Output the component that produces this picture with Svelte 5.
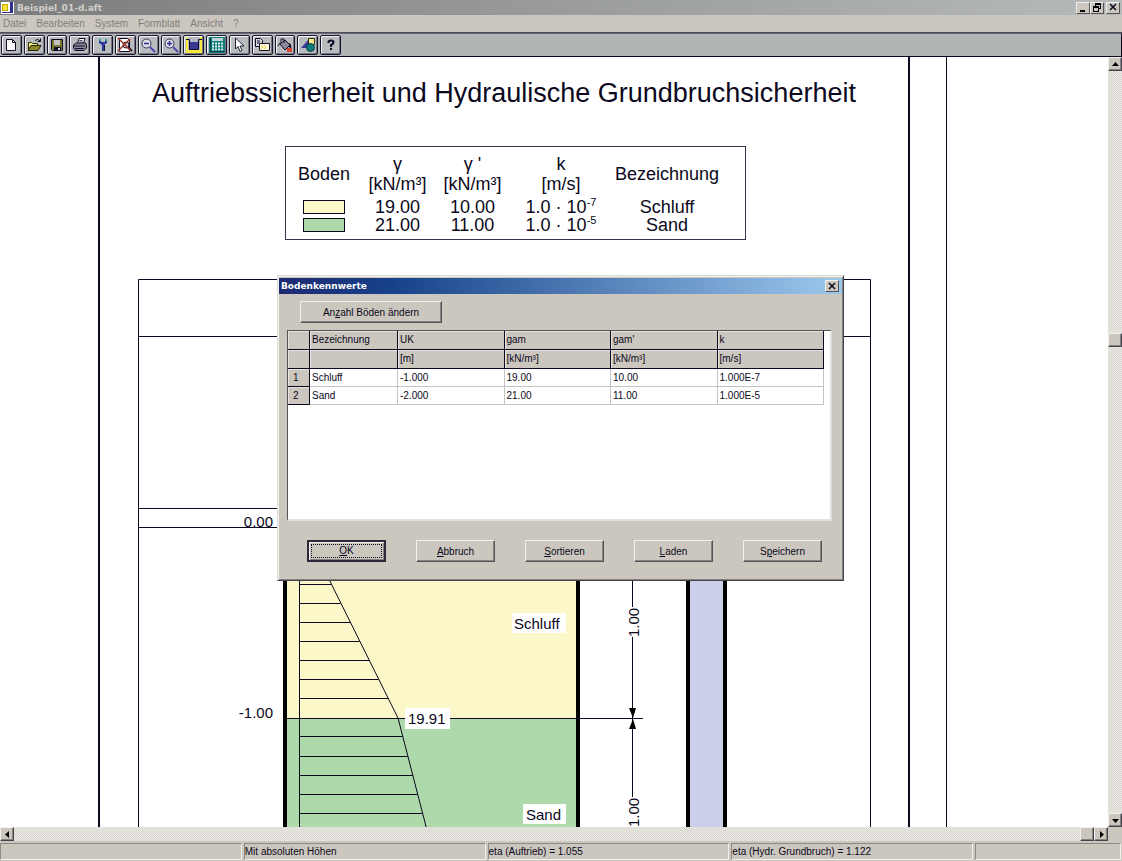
<script lang="ts">
	type Soil = {
		name: string;
		bottom: string;
		gamma: string;
		gammaSub: string;
		k: string;
		exponent: string;
		color: 'silt' | 'sand';
	};

	const menus = ['Datei', 'Bearbeiten', 'System', 'Formblatt', 'Ansicht', '?'];

	const tools = [
		{ id: 'new', label: 'Neu' },
		{ id: 'open', label: 'Öffnen' },
		{ id: 'save', label: 'Speichern' },
		{ id: 'print', label: 'Drucken' },
		{ id: 'settings', label: 'Einstellungen' },
		{ id: 'nozoom', label: 'Ganzes Blatt' },
		{ id: 'zoomout', label: 'Verkleinern' },
		{ id: 'zoomin', label: 'Vergrößern' },
		{ id: 'pit', label: 'Baugrube' },
		{ id: 'calc', label: 'Berechnen' },
		{ id: 'pointer', label: 'Auswählen' },
		{ id: 'copy', label: 'Kopieren' },
		{ id: 'fill', label: 'Farben' },
		{ id: 'shapes', label: 'Objekte' },
		{ id: 'help', label: 'Hilfe' }
	];

	const soils: Soil[] = [
		{ name: 'Schluff', bottom: '-1.000', gamma: '19.00', gammaSub: '10.00', k: '1.000E-7', exponent: '-7', color: 'silt' },
		{ name: 'Sand', bottom: '-2.000', gamma: '21.00', gammaSub: '11.00', k: '1.000E-5', exponent: '-5', color: 'sand' }
	];

	const columns = [
		{ name: 'Bezeichnung', unit: '' },
		{ name: 'UK', unit: '[m]' },
		{ name: 'gam', unit: '[kN/m³]' },
		{ name: "gam'", unit: '[kN/m³]' },
		{ name: 'k', unit: '[m/s]' }
	];

	// label split around the access key
	const actions = [
		['', 'O', 'K'],
		['', 'A', 'bbruch'],
		['', 'S', 'ortieren'],
		['', 'L', 'aden'],
		['S', 'p', 'eichern']
	];

	const status = ['', 'Mit absoluten Höhen', 'eta (Auftrieb) = 1.055', 'eta (Hydr. Grundbruch) = 1.122', ''];

	// pressure diagram: y of each hatch line, the width follows the envelope
	const hatch = [584, 603, 622, 641, 660, 679, 698, 736, 756, 775, 794, 813];
	function envelope(y: number) {
		return y < 718 ? 330 + (y - 582) / 2 : 398 + ((y - 718) * 28) / 109;
	}

	let open = $state(true);
</script>

<div class="app">
	<header class="titlebar">
		<svg class="logo" viewBox="0 0 13 13" shape-rendering="crispEdges" aria-hidden="true">
			<path fill="#fff" d="M0 1h13v12H0z" />
			<path fill="#f5e53c" stroke="#c9a800" d="M1.500 3.500h5v6h-5z" />
			<path fill="#2b2f91" d="M9 1h3v11H1v-1h8z" />
		</svg>
		<span class="title">Beispiel_01-d.aft</span>
		<div class="window-buttons">
			<button type="button" class="sys" aria-label="Minimieren">
				<svg viewBox="0 0 10 9" shape-rendering="crispEdges"><path d="M2 7h5v2H2z" /></svg>
			</button>
			<button type="button" class="sys" aria-label="Wiederherstellen">
				<svg viewBox="0 0 10 9" shape-rendering="crispEdges">
					<path d="M3 0h6v6H7V5h1V2H4v1H3zM1 3h6v6H1zM2 5v3h4V5z" fill-rule="evenodd" />
				</svg>
			</button>
			<button type="button" class="sys close" aria-label="Schließen">
				<svg viewBox="0 0 10 9"><path d="M2 1l6 6M8 1L2 7" stroke="#0b0820" stroke-width="1.500" /></svg>
			</button>
		</div>
	</header>

	<nav class="menubar" aria-label="Menü">
		{#each menus as menu}
			<button type="button">{menu}</button>
		{/each}
	</nav>

	<div class="toolbar" role="toolbar" aria-label="Werkzeuge">
		<div class="tools">
			{#each tools as tool}
				<button type="button" class="tool" aria-label={tool.label}>
					<svg viewBox="0 0 16 16" fill="none">
						{#if tool.id === 'new'}
							<path d="M3.500 2.500h6l3 3v8h-9z" fill="#fff" stroke="#100c28" />
							<path d="M9.500 2.500v3h3" stroke="#100c28" />
						{:else if tool.id === 'open'}
							<path d="M2.500 13V5.500h3l1 1h5V9" fill="#ecea80" stroke="#33330c" />
							<path d="M2 13.500l3-5h10l-3 5z" fill="#8b8a20" stroke="#24240c" />
							<path d="M9 3.500q3-2.500 5 .5M14.500 1.500v3h-3" stroke="#100c28" />
						{:else if tool.id === 'save'}
							<path d="M2.500 2.500h11v11h-10l-1-1z" fill="#77782c" stroke="#100c28" />
							<path d="M5 3h6v5H5z" fill="#c4c2c0" />
							<path d="M5 10h7v4H5z" fill="#100c28" />
							<path d="M9 11h2v2H9z" fill="#d8d8d8" />
						{:else if tool.id === 'print'}
							<path d="M5.500 6.500l1.500-5h6l-1.500 5" fill="#fff" stroke="#100c28" />
							<path d="M7.500 3.500h3M7 5h4" stroke="#54506c" />
							<path d="M1.500 8l3-2h9l1 2v3l-2.500 2.500h-9l-1.500-2z" fill="#8a8798" stroke="#100c28" />
							<path d="M2 9h11M3 11.500h9" stroke="#100c28" />
						{:else if tool.id === 'settings'}
							<path d="M4 3v3l3 2v6h2V8l3-2V3l-2 1v1H6V4z" fill="#2c3798" />
							<path d="M4 3h2M10 3h2" stroke="#29a0a8" stroke-width="2" />
							<path d="M9.500 8v6" stroke="#0d113b" />
						{:else if tool.id === 'nozoom'}
							<path d="M2.500 1.500h8l2 2v11h-10z" fill="#fff" stroke="#100c28" />
							<circle cx="9" cy="8" r="3" fill="#d0d0d8" stroke="#100c28" />
							<path d="M11 10l4 4" stroke="#100c28" stroke-width="2" />
							<path d="M1 1l13 13M13 2L1 14" stroke="#a03a2a" stroke-width="1.500" />
						{:else if tool.id === 'zoomout' || tool.id === 'zoomin'}
							<circle cx="6.500" cy="6.500" r="4.500" fill="#dedee4" stroke="#35345a" />
							<path d="M4 6.500h5" stroke="#2b2f91" stroke-width="1.500" />
							{#if tool.id === 'zoomin'}
								<path d="M6.500 4v5" stroke="#2b2f91" stroke-width="1.500" />
							{/if}
							<path d="M10 10l5 5" stroke="#4a4aae" stroke-width="2" />
						{:else if tool.id === 'pit'}
							<path d="M-1 0h18v17H-1z" fill="#f7e93b" />
							<path d="M2 0h12v13H2z" fill="#b5b7c5" />
							<path d="M-1 2.500h4.500v10h9v-10H17" stroke="#100c28" />
							<path d="M4 5h8v7H4z" fill="#3a3894" />
						{:else if tool.id === 'calc'}
							<path d="M0 0h16v16H0z" fill="#0f7c7c" />
							<path d="M3 1h11v3H3z" fill="#c4d4d4" />
							<path d="M3 6.500h11M3 9.500h11M3 12.500h11" stroke="#d8ecec" stroke-width="2" stroke-dasharray="2 1" />
							<path d="M1.500 1v14M1 14.500h14" stroke="#073c40" />
						{:else if tool.id === 'pointer'}
							<path d="M4.500 1v11l2.500-2.500 2 5 2-1-2-4.500h4z" fill="#fff" stroke="#28243c" />
						{:else if tool.id === 'copy'}
							<path d="M1.500 1.500h5l2 2v6h-7z" fill="#d4d4dc" stroke="#100c28" />
							<path d="M3 4h3M3 6h3" stroke="#100c28" />
							<path d="M5.500 6.500h10v7h-10z" fill="#fffbd8" stroke="#100c28" />
							<path d="M7 8l2 2-2 2M10 8l2 2-2 2" stroke="#e6cf3a" />
						{:else if tool.id === 'fill'}
							<path d="M3 7l5-4 5 5-5 5z" fill="#8b899a" stroke="#100c28" />
							<path d="M4 6V2h3v4M1 9l2-3" stroke="#100c28" />
							<path d="M12 6q3 1 2 6l-2-2z" fill="#100c28" />
							<path d="M10 11h5v4h-5z" fill="#d8432c" />
						{:else if tool.id === 'shapes'}
							<path d="M8.500 1.500h6v6h-6z" fill="#f5e88a" stroke="#33330c" />
							<path d="M1 11l7-8v8z" fill="#3a3894" />
							<circle cx="10.500" cy="10.500" r="4" fill="#0f7c7c" stroke="#0a3c44" />
						{:else}
							<path d="M5.500 6V5q0-1.500 2.500-1.500t2.500 1.500Q10.500 7 8 8v2" stroke="#100c28" stroke-width="2" />
							<path d="M7 11h2v2H7z" fill="#100c28" />
						{/if}
					</svg>
				</button>
			{/each}
		</div>
	</div>

	<main class="workspace">
		<div class="viewport">
			<div class="paper">
				<div class="sheet">
					<h1>Auftriebssicherheit und Hydraulische Grundbruchsicherheit</h1>

					<table class="legend">
						<colgroup>
							<col class="l-soil" />
							<col class="l-gamma" />
							<col class="l-gamma" />
							<col class="l-k" />
							<col />
						</colgroup>
						<thead>
							<tr>
								<th rowspan="2">Boden</th>
								<th>γ</th>
								<th>γ '</th>
								<th>k</th>
								<th rowspan="2">Bezeichnung</th>
							</tr>
							<tr>
								<th>[kN/m³]</th>
								<th>[kN/m³]</th>
								<th>[m/s]</th>
							</tr>
						</thead>
						<tbody>
							{#each soils as soil}
								<tr>
									<td><div class="swatch {soil.color}"></div></td>
									<td>{soil.gamma}</td>
									<td>{soil.gammaSub}</td>
									<td>1.0 · 10<sup>{soil.exponent}</sup></td>
									<td>{soil.name}</td>
								</tr>
							{/each}
						</tbody>
					</table>

					<svg class="section" width="808" height="588" viewBox="100 240 808 588" aria-label="Schnitt">
						<g class="thin">
							<path d="M138.500 840V279.500h732V840" />
							<path d="M138 336.500h732M138 508.500h148M138 527.500h148" />
						</g>

						<rect x="285" y="527" width="293" height="191" fill="#fcf7c9" />
						<rect x="285" y="718" width="293" height="120" fill="#aed9ab" />
						<rect x="688" y="527" width="37" height="311" fill="#cccfea" />
						<path class="wall" d="M285 527v311M578 527v311M688 527v311M725 527v311" />

						<g class="thin">
							<path d="M299.500 527v311M287 718.500h356M632.500 527v80M632.500 637v160" />
							{#each hatch as y}
								<path d="M300 {y + 0.5}H{envelope(y)}" />
							{/each}
						</g>
						<path class="slope" d="M303 527L398 718L429 838" />
						<path d="M629 708h7l-3 10zM629 729h7l-3-10z" />

						<g fill="#fff">
							<rect x="405" y="708" width="45" height="21" />
							<rect x="512" y="613" width="54" height="20" />
							<rect x="523" y="804" width="43" height="20" />
						</g>
						<g class="labels">
							<text x="273" y="527" text-anchor="end">0.00</text>
							<text x="273" y="718" text-anchor="end">-1.00</text>
							<text x="408" y="724">19.91</text>
							<text x="514" y="629">Schluff</text>
							<text x="526" y="820">Sand</text>
							<text transform="translate(639 637) rotate(-90)">1.00</text>
							<text transform="translate(639 827) rotate(-90)">1.00</text>
						</g>
					</svg>
				</div>
			</div>

			{#if open}
				<div class="dialog" role="dialog" aria-labelledby="dialog-title">
					<div class="dialog-title">
						<h2 id="dialog-title">Bodenkennwerte</h2>
						<button type="button" class="sys" aria-label="Schließen" onclick={() => (open = false)}>
							<svg viewBox="0 0 10 9"><path d="M2 1l6 6M8 1L2 7" stroke="#0b0820" stroke-width="1.500" /></svg>
						</button>
					</div>
					<button type="button" class="btn wide">An<u>z</u>ahl Böden ändern</button>
					<div class="grid-box">
						<table class="grid">
							<colgroup>
								<col class="g-index" />
								<col class="g-name" />
								<col /><col /><col /><col />
							</colgroup>
							<thead>
								<tr>
									<th></th>
									{#each columns as column}
										<th>{column.name}</th>
									{/each}
								</tr>
								<tr>
									<th></th>
									{#each columns as column}
										<th>{column.unit}</th>
									{/each}
								</tr>
							</thead>
							<tbody>
								{#each soils as soil, i}
									<tr>
										<th>{i + 1}</th>
										<td>{soil.name}</td>
										<td>{soil.bottom}</td>
										<td>{soil.gamma}</td>
										<td>{soil.gammaSub}</td>
										<td>{soil.k}</td>
									</tr>
								{/each}
							</tbody>
						</table>
					</div>
					<div class="actions">
						{#each actions as [before, key, after], i}
							<button type="button" class="btn" class:default={i === 0} onclick={() => (open = i > 1)}>
								<span>{before}<u>{key}</u>{after}</span>
							</button>
						{/each}
					</div>
				</div>
			{/if}
		</div>

		<div class="scroll vertical">
			<button type="button" aria-label="Nach oben"><svg viewBox="0 0 7 7"><path d="M0 5h7L3.500 1z" /></svg></button>
			<div class="before"></div>
			<div class="thumb"></div>
			<div class="after"></div>
			<button type="button" aria-label="Nach unten"><svg viewBox="0 0 7 7"><path d="M0 2h7L3.500 6z" /></svg></button>
		</div>
		<div class="scroll horizontal">
			<button type="button" aria-label="Nach links"><svg viewBox="0 0 7 7"><path d="M5 0v7L1 3.500z" /></svg></button>
			<div class="before"></div>
			<div class="thumb"></div>
			<button type="button" aria-label="Nach rechts"><svg viewBox="0 0 7 7"><path d="M2 0v7l4-3.500z" /></svg></button>
		</div>
	</main>

	<footer class="statusbar">
		{#each status as text}
			<div class="pane">{text}</div>
		{/each}
	</footer>
</div>

<style>
	:global(body) {
		margin: 0;
		background: #cbc7bf;
	}
	.app {
		height: 100vh;
		display: flex;
		flex-direction: column;
		overflow: hidden;
		background: #cbc7bf;
		color: #0b0820;
		font-family: 'Liberation Sans', Arial, sans-serif;
		font-size: 10px;
	}
	button {
		font: inherit;
		color: inherit;
		padding: 0;
		margin: 0;
		border: 0;
		background: #cbc7bf;
	}
	svg {
		display: block;
	}

	.titlebar {
		height: 15px;
		flex: none;
		display: flex;
		align-items: center;
		gap: 3px;
		padding: 0 2px 0 1px;
		background: linear-gradient(90deg, #7b7c7d, #b7babb);
	}
	.logo {
		width: 13px;
		height: 13px;
	}
	.title {
		flex: 1;
		color: #d2cfc8;
		font-family: 'DejaVu Sans', sans-serif;
		font-weight: bold;
		font-size: 9px;
	}
	.window-buttons {
		display: flex;
	}
	.sys {
		width: 14px;
		height: 12px;
		box-sizing: border-box;
		display: flex;
		align-items: center;
		justify-content: center;
		border: 1px solid;
		border-color: #f2f0ec #55525a #55525a #f2f0ec;
	}
	.sys.close {
		margin-left: 2px;
	}
	.sys svg {
		width: 10px;
		height: 9px;
	}

	.menubar {
		height: 17px;
		flex: none;
		display: flex;
		align-items: center;
		gap: 10px;
		padding: 0 3px;
		border-bottom: 1px solid #514b5c;
	}
	.menubar button {
		color: #817e7a;
	}

	.toolbar {
		flex: none;
		padding: 1px;
		background: #b1b5b6;
		border-top: 1px solid #68656f;
		border-right: 1px solid #0b0820;
		border-bottom: 1px solid #0b0820;
	}
	.tools {
		width: 340px;
		display: grid;
		grid-template-columns: repeat(15, 1fr);
		gap: 2px;
	}
	.tool {
		height: 20px;
		box-sizing: border-box;
		display: flex;
		align-items: center;
		justify-content: center;
		background: #b9bcbd;
		border: 1px solid #191530;
		border-radius: 2px;
		box-shadow: inset 1px 1px #f4f4f4, inset -1px -1px #77757f;
	}
	.tool svg {
		width: 16px;
		height: 16px;
	}

	.workspace {
		flex: 1;
		min-height: 0;
		display: grid;
		grid-template-columns: 1fr 14px;
		grid-template-rows: 1fr 14px;
	}
	.viewport {
		position: relative;
		overflow: hidden;
		background: #fff;
	}
	.paper {
		width: 848px;
		height: 100%;
		margin-left: 98px;
		border-right: 1px solid #0b0820;
	}
	.sheet {
		width: 808px;
		height: 100%;
		display: flex;
		flex-direction: column;
		border: 0 solid #0b0820;
		border-width: 0 2px;
	}
	h1 {
		margin: 20px 0 37px;
		font-weight: normal;
		font-size: 27px;
		line-height: 32px;
		text-align: center;
		white-space: nowrap;
	}
	.legend {
		width: 461px;
		flex: none;
		box-sizing: border-box;
		margin-left: 185px;
		padding: 7px 23px 5px 2px;
		border: 1px solid #37344a;
		border-spacing: 0;
		table-layout: fixed;
		font-size: 18px;
		line-height: 18px;
		text-align: center;
	}
	.l-soil {
		width: 72px;
	}
	.l-gamma {
		width: 75px;
	}
	.l-k {
		width: 102px;
	}
	.legend th,
	.legend td {
		padding: 0;
		font-weight: normal;
		white-space: nowrap;
	}
	.legend thead th {
		height: 20px;
	}
	.legend tbody::before {
		content: '';
		display: block;
		height: 4px;
	}
	.legend tbody td {
		height: 18px;
	}
	.legend sup {
		font-size: 11px;
		line-height: 0;
	}
	.swatch {
		width: 40px;
		height: 12px;
		margin: 0 auto;
		border: 1px solid #0b0820;
	}
	.swatch.silt {
		background: #fcf7c9;
	}
	.swatch.sand {
		background: #aed9ab;
	}
	.section {
		flex: none;
	}
	.thin {
		fill: none;
		stroke: #0b0820;
		stroke-width: 1;
	}
	.wall {
		fill: none;
		stroke: #000;
		stroke-width: 4;
	}
	.slope {
		fill: none;
		stroke: #0b0820;
	}
	.labels {
		font-size: 15px;
		fill: #0b0820;
	}

	.dialog {
		position: absolute;
		left: 277px;
		top: 218px;
		width: 567px;
		box-sizing: border-box;
		padding: 2px 1px 18px;
		background: #cbc7bf;
		border: 1px solid;
		border-color: #dedcd6 #45434c #45434c #dedcd6;
		box-shadow: inset 1px 1px #f2f0ec, inset -1px -1px #85827f;
	}
	.dialog-title {
		height: 16px;
		display: flex;
		align-items: center;
		justify-content: space-between;
		padding: 0 3px 0 2px;
		background: linear-gradient(90deg, #1e2a72, #17428a 20%, #9cc8ee);
	}
	h2 {
		margin: 0;
		color: #fff;
		font-family: 'DejaVu Sans', sans-serif;
		font-size: 9px;
	}
	.btn {
		width: 79px;
		height: 22px;
		border: 1px solid;
		border-color: #f2f0ec #55525a #55525a #f2f0ec;
		box-shadow: inset -1px -1px #85827f;
	}
	.btn.wide {
		display: block;
		width: 142px;
		margin: 7px 0 7px 21px;
	}
	.btn.default {
		padding: 2px;
		border: 2px solid #2b283a;
		box-shadow: inset 1px 1px #f2f0ec, inset -1px -1px #85827f;
	}
	.btn.default span {
		display: block;
		border: 1px dotted #0b0820;
		line-height: 12px;
	}
	.grid-box {
		height: 188px;
		margin: 0 10px 0 8px;
		background: #fff;
		border: 1px solid;
		border-width: 1px 2px 2px 1px;
		border-color: #55525a #e2e0db #e2e0db #55525a;
	}
	.grid {
		width: 536px;
		table-layout: fixed;
		border-spacing: 0;
		text-align: left;
		line-height: 12px;
	}
	.g-index {
		width: 22px;
	}
	.g-name {
		width: 88px;
	}
	.grid th,
	.grid td {
		height: 18px;
		box-sizing: border-box;
		padding: 0 2px;
		font-weight: normal;
		border: 0 solid #c4c4c4;
		border-width: 0 1px 1px 0;
	}
	.grid thead th {
		height: 19px;
	}
	.grid th {
		background: #cbc7bf;
		border-color: #0b0820;
		box-shadow: inset 1px 1px #e6e4df;
	}
	.grid tr > :first-child {
		padding-left: 5px;
	}
	.actions {
		display: flex;
		gap: 30px;
		margin: 19px 0 0 28px;
	}

	.scroll {
		display: flex;
		background: repeating-conic-gradient(#d9d6d0 0 25%, #ebe9e6 0 50%) 0 0 / 2px 2px;
	}
	.scroll.vertical {
		flex-direction: column;
	}
	.scroll button,
	.thumb {
		width: 14px;
		height: 14px;
		flex: none;
		box-sizing: border-box;
		display: flex;
		align-items: center;
		justify-content: center;
		background: #cbc7bf;
		border: 1px solid;
		border-color: #f2f0ec #45434c #45434c #f2f0ec;
		box-shadow: inset -1px -1px #85827f;
	}
	.scroll svg {
		width: 7px;
		height: 7px;
	}
	.vertical .before {
		flex: 36;
	}
	.vertical .after {
		flex: 64;
	}
	.horizontal .before {
		flex: 1;
	}

	.statusbar {
		flex: none;
		display: flex;
		gap: 2px;
		padding: 2px 1px 1px 0;
	}
	.pane {
		flex: 5 1 0;
		height: 15px;
		line-height: 15px;
		overflow: hidden;
		white-space: nowrap;
		border: 1px solid;
		border-color: #8d8a86 #f2f0ec #f2f0ec #8d8a86;
	}
	.pane:last-child {
		flex-grow: 3;
	}
</style>
